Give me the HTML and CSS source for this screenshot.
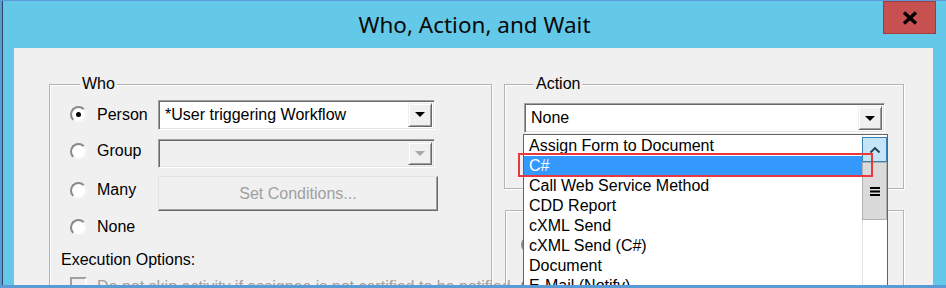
FILE: index.html
```html
<!DOCTYPE html>
<html lang="en">
  <head>
    <meta charset="UTF-8" />
    <title>Who, Action, and Wait</title>
    <link rel="stylesheet" href="styles.css">
  </head>
  <body>
    <div class="screen">
      <div class="window">
        <div class="titlebar">
          <div class="title">Who, Action, and Wait</div>
          <div class="close">
            <svg width="16" height="14" viewBox="0 0 16 14">
              <path d="M2 1.5 L14 12.5 M14 1.5 L2 12.5" stroke="#000" stroke-width="3.4" fill="none" />
            </svg>
          </div>
        </div>

        <div class="client">
          <fieldset class="group who">
            <legend>Who</legend>
            <div class="row r1">
              <span class="radio checked"></span>
              <span class="opt">Person</span>
              <div class="combo">
                <span class="combo-text">*User triggering Workflow</span>
                <span class="drop"><i class="tri"></i></span>
              </div>
            </div>
            <div class="row r2">
              <span class="radio"></span>
              <span class="opt">Group</span>
              <div class="combo disabled">
                <span class="combo-text"></span>
                <span class="drop"><i class="tri"></i></span>
              </div>
            </div>
            <div class="row r3">
              <span class="radio"></span>
              <span class="opt">Many</span>
              <div class="btn">Set Conditions...</div>
            </div>
            <div class="row r4">
              <span class="radio"></span>
              <span class="opt">None</span>
            </div>
            <div class="exec">Execution Options:</div>
            <div class="check-row">
              <span class="check"></span>
              <span class="check-text">Do not skip activity if assignee is not certified to be notified</span>
            </div>
          </fieldset>

          <div class="right">
            <fieldset class="group action">
              <legend>Action</legend>
              <div class="wrap">
                <div class="combo wide">
                  <span class="combo-text">None</span>
                  <span class="drop"><i class="tri"></i></span>
                </div>
                <div class="list">
                  <div class="items">
                    <div class="item">Assign Form to Document</div>
                    <div class="item sel">C#</div>
                    <div class="item">Call Web Service Method</div>
                    <div class="item">CDD Report</div>
                    <div class="item">cXML Send</div>
                    <div class="item">cXML Send (C#)</div>
                    <div class="item">Document</div>
                    <div class="item">E-Mail (Notify)</div>
                  </div>
                  <div class="scroll">
                    <div class="up">
                      <svg width="12" height="8" viewBox="0 0 12 8">
                        <path d="M1.5 6.5 L6 2 L10.5 6.5" stroke="#1d3b55" stroke-width="1.8" fill="none" />
                      </svg>
                    </div>
                    <div class="thumb">
                      <svg width="10" height="9" viewBox="0 0 10 9">
                        <path d="M0 1 H10 M0 4.5 H10 M0 8 H10" stroke="#000" stroke-width="1.8" />
                      </svg>
                    </div>
                  </div>
                  <div class="mark"></div>
                </div>
              </div>
            </fieldset>

            <fieldset class="group wait">
              <legend>Wait</legend>
              <span class="radio"></span>
              <span class="radio second"></span>
            </fieldset>
          </div>
        </div>
      </div>
    </div>
  </body>
</html>
```

FILE: styles.css
```css
* {
  box-sizing: border-box;
}

body {
  margin: 0;
  font-family: "Liberation Sans", Arial, sans-serif;
  font-size: 16px;
  color: #000;
}

.screen {
  width: 946px;
  height: 288px;
  overflow: hidden;
  background: #64c8e9;
  border-top: 1px solid #5f9ad6;
  border-left: 2px solid #5b9bd5;
  border-bottom: 3px solid #5b9bd5;
}

.window {
  height: 100%;
  border-left: 1px solid #2c4763;
  display: flex;
  flex-direction: column;
}

/* title bar */
.titlebar {
  height: 47px;
  flex-shrink: 0;
  display: grid;
  grid-template-columns: 1fr auto 1fr;
  align-items: center;
}

.title {
  grid-column: 2;
  font-family: "Noto Sans", sans-serif;
  font-size: 22.5px;
  color: #0a0a0a;
}

.close {
  grid-column: 3;
  justify-self: end;
  align-self: start;
  width: 53px;
  height: 33px;
  margin-right: 10px;
  background: #c75050;
  border: 1px solid #9f3d3d;
  display: flex;
  align-items: center;
  justify-content: center;
}

/* client area */
.client {
  flex: 1;
  margin: 0 13px 0 11px;
  background: #f0f0f0;
  display: flex;
  align-items: flex-start;
  padding: 27px 0 0 35px;
}

.group {
  margin: 0;
  min-width: 0;
  border: 1px solid #b4b4b4;
  box-shadow: inset 1px 1px 0 #fff, 1px 1px 0 #fff;
}

.group legend {
  margin-left: 10px;
  padding: 0 2px;
  line-height: 18px;
  background: #f0f0f0;
}

.who {
  width: 443px;
  height: 260px;
  padding: 3px 0 0 20px;
}

.row {
  display: flex;
  align-items: center;
}

.r1 { height: 37px; }
.r2 { height: 36px; }
.r3 { height: 42px; }
.r4 { height: 32px; }

.radio {
  display: inline-block;
  flex-shrink: 0;
  width: 17px;
  height: 17px;
  border-radius: 50%;
  border: 2px solid;
  border-color: #8a8a8a #f4f4f4 #f4f4f4 #8a8a8a;
  background: #fff;
  position: relative;
}

.radio.checked::after {
  content: "";
  position: absolute;
  left: 4px;
  top: 4px;
  width: 5px;
  height: 5px;
  border-radius: 50%;
  background: #000;
}

.opt {
  width: 61px;
  margin-left: 10px;
}

.combo {
  width: 277px;
  height: 30px;
  display: flex;
  align-items: center;
  background: #fff;
  border: 1px solid;
  border-color: #a0a0a0 #fff #fff #a0a0a0;
  box-shadow: inset 1px 1px 0 #696969, inset -1px -1px 0 #e3e3e3;
}

.combo-text {
  padding-left: 6px;
  white-space: nowrap;
}

.drop {
  width: 24px;
  height: calc(100% - 4px);
  margin: 0 2px 0 auto;
  background: #f0f0f0;
  border: 1px solid;
  border-color: #f0f0f0 #696969 #696969 #f0f0f0;
  box-shadow: inset 1px 1px 0 #fff, inset -1px -1px 0 #a0a0a0;
  display: flex;
  align-items: center;
  justify-content: center;
}

.tri {
  width: 0;
  height: 0;
  border-left: 5px solid transparent;
  border-right: 5px solid transparent;
  border-top: 5px solid #000;
}

.combo.disabled {
  height: 29px;
  align-self: flex-end;
  margin-bottom: 1px;
  background: #f0f0f0;
}

.combo.disabled .tri {
  border-top-color: #a8a8a8;
}

.btn {
  width: 280px;
  height: 35px;
  align-self: flex-end;
  display: flex;
  align-items: center;
  justify-content: center;
  color: #a0a0a0;
  border: 1px solid;
  border-color: #e3e3e3 #696969 #696969 #e3e3e3;
  box-shadow: inset -1px -1px 0 #a0a0a0;
}

.exec {
  margin: 8px 0 0 -9px;
  line-height: 18px;
}

.check-row {
  display: flex;
  margin-top: 8px;
}

.check {
  width: 17px;
  height: 17px;
  flex-shrink: 0;
  border: 2px solid;
  border-color: #a0a0a0 #fff #fff #a0a0a0;
  background: #f0f0f0;
}

.check-text {
  margin-left: 10px;
  margin-top: 1px;
  color: #a0a0a0;
  white-space: nowrap;
}

/* right column */
.right {
  margin-left: 12px;
  display: flex;
  flex-direction: column;
}

.action {
  width: 400px;
  height: 114px;
  padding: 10px 0 0 19px;
}

.wait {
  width: 399px;
  height: 100px;
  margin: 12px 0 0 1px;
  padding: 17px 0 0 15px;
  display: flex;
  flex-direction: column;
  gap: 25px;
}

.wrap {
  position: relative;
}

.combo.wide {
  width: 361px;
}

.list {
  position: absolute;
  left: -1px;
  top: 31px;
  width: 365px;
  height: 170px;
  background: #fff;
  border: 1px solid #646464;
  display: flex;
  z-index: 2;
}

.items {
  flex: 1;
  padding-top: 1px;
}

.item {
  height: 20px;
  line-height: 20px;
  padding-left: 5px;
  white-space: nowrap;
}

.item.sel {
  background: #3399ff;
  color: #fff;
}

.scroll {
  width: 25px;
  background: #fff;
  box-shadow: inset 1px 0 0 #e3e3e3;
}

.up {
  height: 25px;
  margin-top: 2px;
  background: #c4e5f7;
  border: 1px solid #3c7fb1;
  display: flex;
  align-items: center;
  justify-content: center;
}

.thumb {
  height: 58px;
  background: #dadada;
  border: 1px solid #b0b0b0;
  display: flex;
  align-items: center;
  justify-content: center;
}

.mark {
  position: absolute;
  left: -6px;
  top: 18px;
  width: 355px;
  height: 24px;
  border: 2px solid #e8393f;
  z-index: 3;
}
```
